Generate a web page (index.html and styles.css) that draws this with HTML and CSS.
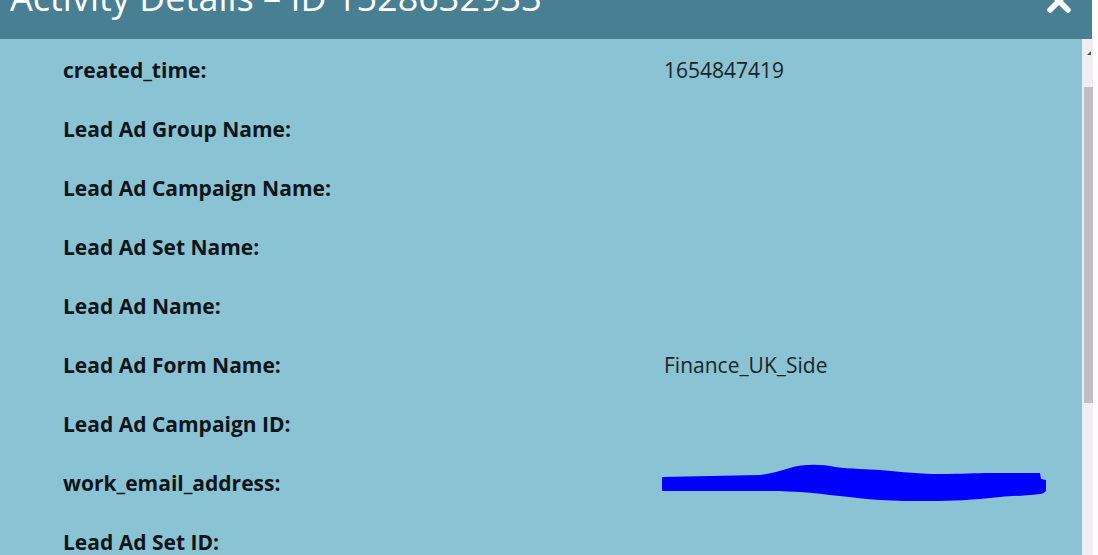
FILE: index.html
```html
<!DOCTYPE html>
<html>
<head>
<meta charset="utf-8">
<link rel="stylesheet" href="styles.css">
</head>
<body>
<div class="dialog">
  <header class="titlebar">
    <h1 class="title">Activity Details – ID 1528632933</h1>
    <svg class="close" width="26" height="26" viewBox="0 0 26 26"><path d="M4 4 L22 22 M22 4 L4 22" stroke="#fff" stroke-width="5.5" stroke-linecap="round"/></svg>
  </header>
  <div class="body">
    <div class="content">
      <div class="row"><span class="label">created_time:</span><span class="value">1654847419</span></div>
      <div class="row"><span class="label">Lead Ad Group Name:</span><span class="value"></span></div>
      <div class="row"><span class="label">Lead Ad Campaign Name:</span><span class="value"></span></div>
      <div class="row"><span class="label">Lead Ad Set Name:</span><span class="value"></span></div>
      <div class="row"><span class="label">Lead Ad Name:</span><span class="value"></span></div>
      <div class="row"><span class="label">Lead Ad Form Name:</span><span class="value">Finance_UK_Side</span></div>
      <div class="row"><span class="label">Lead Ad Campaign ID:</span><span class="value"></span></div>
      <div class="row"><span class="label">work_email_address:</span><span class="value redact"><svg width="386" height="42" viewBox="0 0 386 42"><path d="M0 15 L98 13 C108 12 118 9 128 6 C140 2 160 2 173 5 C190 7 205 7 218 8 C240 10 260 12 278 12 C300 12 315 11 328 11 L378 11 L379 17 L384 18 L384 29 C382 31 380 32 378 32 C360 34 350 34 338 35 C310 38 290 39 268 39 C250 39 235 39 218 38 C190 36 165 32 138 30 C120 29 110 29 98 29 L0 29 Z" fill="#0000ff"/></svg></span></div>
      <div class="row"><span class="label">Lead Ad Set ID:</span><span class="value"></span></div>
    </div>
    <div class="scrollbar">
      <div class="arrow"></div>
      <div class="thumb"></div>
    </div>
    <div class="edge"></div>
  </div>
</div>
</body>
</html>
```
FILE: styles.css
```css
html, body {
  margin: 0;
  padding: 0;
  width: 1098px;
  height: 555px;
  overflow: hidden;
  background: #ffffff;
  font-family: "Open Sans", "Noto Sans", sans-serif;
}
.dialog {
  display: flex;
  flex-direction: column;
  height: 555px;
}
.titlebar {
  position: relative;
  width: 1092px;
  height: 39px;
  background: #497f92;
  overflow: hidden;
  flex: none;
}
.title {
  margin: -27px 0 0 10px;
  font-size: 36px;
  line-height: 49px;
  font-weight: 400;
  color: #ffffff;
  white-space: nowrap;
}
.close {
  position: absolute;
  left: 1046px;
  top: -12px;
}
.body {
  flex: 1;
  display: flex;
  min-height: 0;
}
.content {
  flex: 1;
  background: #8ac3d3;
  padding: 17px 0 0 63px;
  overflow: hidden;
}
.row {
  display: flex;
  height: 59px;
  align-items: flex-start;
}
.label {
  width: 601px;
  flex: none;
  font-weight: 700;
  font-size: 21px;
  line-height: 28px;
  color: #0d1519;
}
.value {
  font-size: 21px;
  line-height: 28px;
  color: #1a2428;
}
.redact {
  margin-top: -7px;
  margin-left: -2px;
}
.redact svg {
  display: block;
}
.scrollbar {
  width: 11px;
  background: #f0eef0;
  position: relative;
  flex: none;
}
.arrow {
  position: absolute;
  left: 5px;
  top: 12px;
  width: 0;
  height: 0;
  border-left: 4px solid transparent;
  border-bottom: 4px solid #505050;
}
.thumb {
  position: absolute;
  left: 2px;
  right: 0;
  top: 48px;
  height: 316px;
  background: #c0bec0;
}
.edge {
  width: 5px;
  background: #ffffff;
  flex: none;
}
```
